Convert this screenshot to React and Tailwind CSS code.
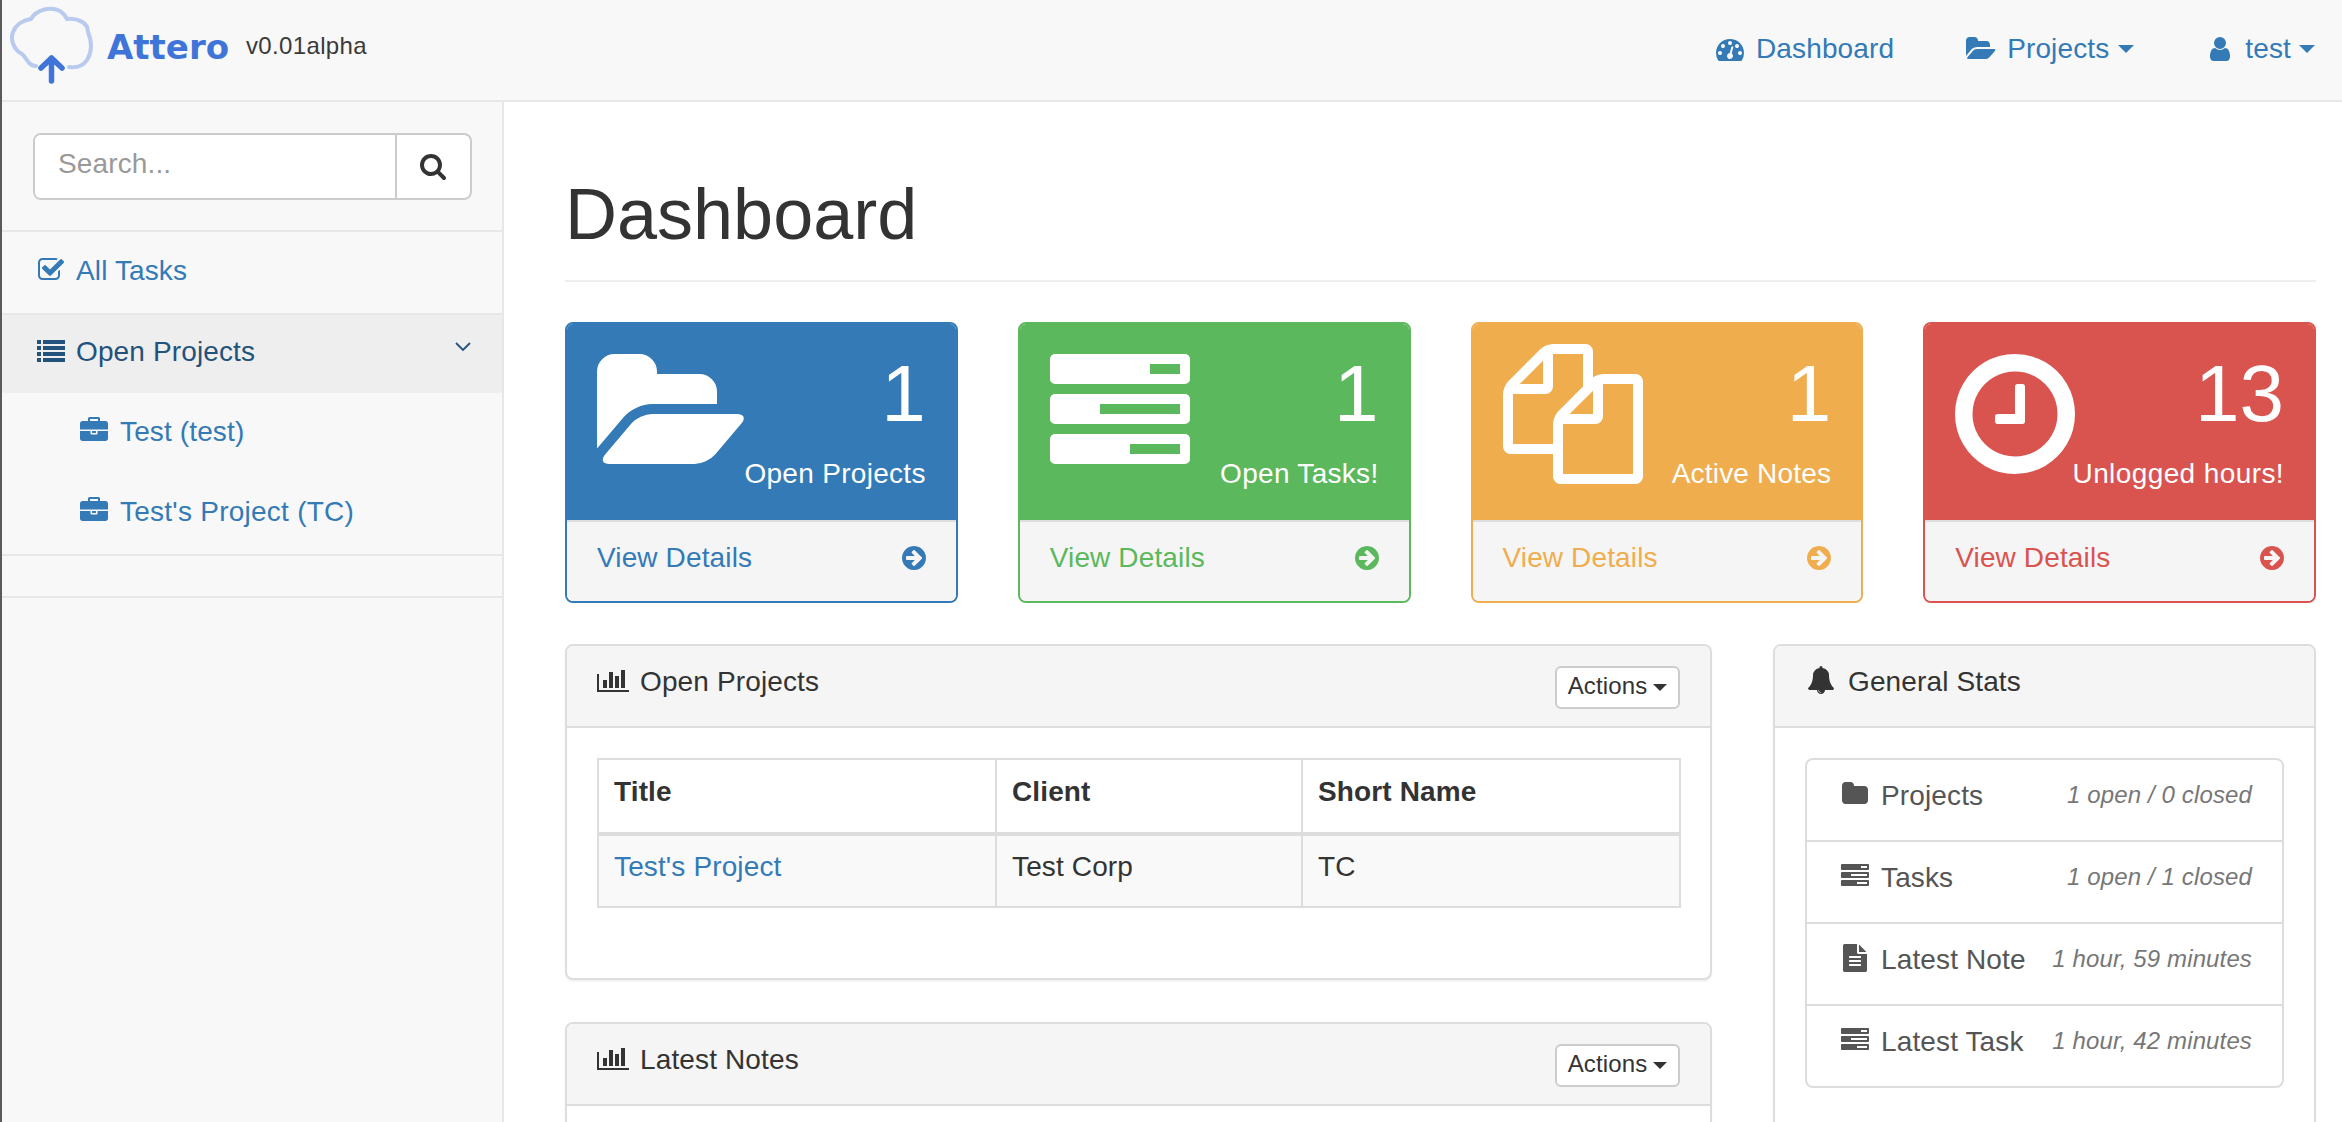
import React from "react";

const P = {
  folderOpen: "M1879 952q0 31-31 66l-336 396q-43 51-120.5 86.5t-143.5 35.5h-1088q-34 0-60.5-13t-26.5-43q0-31 31-66l336-396q43-51 120.5-86.5t143.5-35.5h1088q34 0 60.5 13t26.5 43zm-343-344v160h-832q-94 0-197 47.5t-164 119.5l-337 396-5 6q0-4-.5-12.5t-.5-12.5v-960q0-92 66-158t158-66h320q92 0 158 66t66 158v32h544q92 0 158 66t66 158z",
  tasks: "M1024 1408h640v-128h-640v128zm-384-512h1024v-128h-1024v128zm640-512h384v-128h-384v128zm512 832v256q0 26-19 45t-45 19h-1664q-26 0-45-19t-19-45v-256q0-26 19-45t45-19h1664q26 0 45 19t19 45zm0-512v256q0 26-19 45t-45 19h-1664q-26 0-45-19t-19-45v-256q0-26 19-45t45-19h1664q26 0 45 19t19 45zm0-512v256q0 26-19 45t-45 19h-1664q-26 0-45-19t-19-45v-256q0-26 19-45t45-19h1664q26 0 45 19t19 45z",
  files: "M1696 384q40 0 68 28t28 68v1216q0 40-28 68t-68 28h-960q-40 0-68-28t-28-68v-288h-544q-40 0-68-28t-28-68v-672q0-40 20-88t48-76l408-408q28-28 76-48t88-20h416q40 0 68 28t28 68v328q68-40 128-40h416zm-544 213l-299 299h299v-299zm-640-384l-299 299h299v-299zm196 647l316-316v-416h-384v416q0 40-28 68t-68 28h-416v640h512v-256q0-40 20-88t48-76zm956 804v-1152h-384v416q0 40-28 68t-68 28h-416v640h896z",
  clock: "M1024 544v448q0 14-9 23t-23 9h-320q-14 0-23-9t-9-23v-64q0-14 9-23t23-9h224v-352q0-14 9-23t23-9h64q14 0 23 9t9 23zm416 352q0-148-73-273t-198-198-273-73-273 73-198 198-73 273 73 273 198 198 273 73 273-73 198-198 73-273zm224 0q0 209-103 385.5t-279.5 279.5-385.5 103-385.5-103-279.5-279.5-103-385.5 103-385.5 279.5-279.5 385.5-103 385.5 103 279.5 279.5 103 385.5z",
  arrow: "M1285 896q0-27-18-45l-91-91-362-362q-18-18-45-18t-45 18l-91 91q-18 18-18 45t18 45l189 189h-502q-26 0-45 19t-19 45v128q0 26 19 45t45 19h502l-189 189q-19 19-19 45t19 45l91 91q18 18 45 18t45-18l362-362 91-91q18-18 18-45zm251 0q0 209-103 385.5t-279.5 279.5-385.5 103-385.5-103-279.5-279.5-103-385.5 103-385.5 279.5-279.5 385.5-103 385.5 103 279.5 279.5 103 385.5z",
  search: "M1216 832q0-185-131.5-316.5t-316.5-131.5-316.5 131.5-131.5 316.5 131.5 316.5 316.5 131.5 316.5-131.5 131.5-316.5zm512 832q0 52-38 90t-90 38q-54 0-90-38l-343-342q-179 124-399 124-143 0-273.5-55.5t-225-150-150-225-55.5-273.5 55.5-273.5 150-225 225-150 273.5-55.5 273.5 55.5 225 150 150 225 55.5 273.5q0 220-124 399l343 343q37 37 37 90z",
  check: "M1472 930v318q0 119-84.5 203.5t-203.5 84.5h-832q-119 0-203.5-84.5t-84.5-203.5v-832q0-119 84.5-203.5t203.5-84.5h832q63 0 117 25 15 7 18 23 3 17-9 29l-49 49q-10 10-23 10-3 0-9-2-23-6-45-6h-832q-66 0-113 47t-47 113v832q0 66 47 113t113 47h832q66 0 113-47t47-113v-254q0-13 9-22l64-64q10-10 23-10 6 0 12 3 20 8 20 29zm231-489l-814 814q-24 24-57 24t-57-24l-430-430q-24-24-24-57t24-57l110-110q24-24 57-24t57 24l263 263 647-647q24-24 57-24t57 24l110 110q24 24 24 57t-24 57z",
  briefcase: "M640 256h512v-128h-512v128zm1152 640v480q0 66-47 113t-113 47h-1472q-66 0-113-47t-47-113v-480h672v160q0 26 19 45t45 19h320q26 0 45-19t19-45v-160h672zm-768 0v128h-256v-128h256zm768-480v384h-1792v-384q0-66 47-113t113-47h352v-160q0-40 28-68t68-28h576q40 0 68 28t28 68v160h352q66 0 113 47t47 113z",
  dashboard: "M384 1152q0-53-37.5-90.5t-90.5-37.5-90.5 37.5-37.5 90.5 37.5 90.5 90.5 37.5 90.5-37.5 37.5-90.5zm192-448q0-53-37.5-90.5t-90.5-37.5-90.5 37.5-37.5 90.5 37.5 90.5 90.5 37.5 90.5-37.5 37.5-90.5zm428 481l101-382q6-26-7.5-48.5t-38.5-29.5-48 6.5-30 39.5l-101 382q-60 5-107 43.5t-63 98.5q-20 77 20 146t117 89 146-20 89-117q16-60-6-117t-72-91zm660-33q0-53-37.5-90.5t-90.5-37.5-90.5 37.5-37.5 90.5 37.5 90.5 90.5 37.5 90.5-37.5 37.5-90.5zm-640-640q0-53-37.5-90.5t-90.5-37.5-90.5 37.5-37.5 90.5 37.5 90.5 90.5 37.5 90.5-37.5 37.5-90.5zm448 192q0-53-37.5-90.5t-90.5-37.5-90.5 37.5-37.5 90.5 37.5 90.5 90.5 37.5 90.5-37.5 37.5-90.5zm320 448q0 261-141 483-19 29-54 29h-1402q-35 0-54-29-141-221-141-483 0-182 71-348t191-286 286-191 348-71 348 71 286 191 191 286 71 348z",
  user: "M1536 1399q0 109-62.5 187t-150.5 78h-854q-88 0-150.5-78t-62.5-187q0-85 8.5-160.5t31.5-152 58.5-131 94-89 134.5-34.5q131 128 313 128t313-128q76 0 134.5 34.5t94 89 58.5 131 31.5 152 8.5 160.5zm-256-887q0 159-112.5 271.5t-271.5 112.5-271.5-112.5-112.5-271.5 112.5-271.5 271.5-112.5 271.5 112.5 112.5 271.5z",
  chart: "M640 896v512h-256v-512h256zm384-512v1024h-256v-1024h256zm1024 1152v128h-2048v-1152h128v1024h1920zm-640-896v768h-256v-768h256zm384-384v1152h-256v-1152h256z",
  bell: "M912 1696q0-16-16-16-59 0-101.5-42.5t-42.5-101.5q0-16-16-16t-16 16q0 73 51.5 124.5t124.5 51.5q16 0 16-16zm816-288q0 52-38 90t-90 38h-448q0 106-75 181t-181 75-181-75-75-181h-448q-52 0-90-38t-38-90q50-42 91-88t85-119.5 74.5-158.5 50-206 19.5-260q0-152 117-282.5t307-158.5q-8-19-8-39 0-40 28-68t68-28 68 28 28 68q0 20-8 39 190 28 307 158.5t117 282.5q0 139 19.5 260t50 206 74.5 158.5 85 119.5 91 88z",
  folder: "M1728 608v704q0 92-66 158t-158 66h-1216q-92 0-158-66t-66-158v-960q0-92 66-158t158-66h320q92 0 158 66t66 158v32h672q92 0 158 66t66 158z",
  file: "M1596 476q14 14 28 36h-472v-472q22 14 36 28zm-476 164h544v1056q0 40-28 68t-68 28h-1344q-40 0-68-28t-28-68v-1600q0-40 28-68t68-28h800v544q0 40 28 68t68 28zm160 736v-64q0-14-9-23t-23-9h-704q-14 0-23 9t-9 23v64q0 14 9 23t23 9h704q14 0 23-9t9-23zm0-256v-64q0-14-9-23t-23-9h-704q-14 0-23 9t-9 23v64q0 14 9 23t23 9h704q14 0 23-9t9-23zm0-256v-64q0-14-9-23t-23-9h-704q-14 0-23 9t-9 23v64q0 14 9 23t23 9h704q14 0 23-9t9-23z",
};

function Fa({ d, w = 1792, x = 0, className }) {
  return (
    <svg viewBox={`${x} 0 ${w} 1792`} className={`block shrink-0 fill-current ${className}`}>
      <path d={d} />
    </svg>
  );
}

function ListIcon({ className }) {
  return (
    <svg viewBox="0 0 28 22" className={`block shrink-0 fill-current ${className}`}>
      <rect x="0" y="0" width="4" height="4" />
      <rect x="6" y="0" width="22" height="4" />
      <rect x="0" y="6" width="4" height="4" />
      <rect x="6" y="6" width="22" height="4" />
      <rect x="0" y="12" width="4" height="4" />
      <rect x="6" y="12" width="22" height="4" />
      <rect x="0" y="18" width="4" height="4" />
      <rect x="6" y="18" width="22" height="4" />
    </svg>
  );
}

function Caret({ className }) {
  return (
    <span className={`inline-block w-0 h-0 border-x-[8px] border-x-transparent border-t-[8px] border-t-current ${className}`} />
  );
}

function Logo() {
  return (
    <svg viewBox="0 0 100 90" className="block w-[100px] h-[90px] shrink-0" fill="none">
      <path
        d="M36 66C28 66 27 58 22 54C14 50 10 40 13 32C16 24 24 20 31 19C36 10 50 6 60 11C63 13 65 15 67 19C77 18 88 22 88 32C92 42 92 52 87 60C83 66 76 68 69 67"
        stroke="#b8cbef"
        strokeWidth="4"
        strokeLinecap="round"
      />
      <path d="M51.5 81V58M41 68L51.5 58L62 68" stroke="#3f74d8" strokeWidth="5.5" strokeLinecap="round" strokeLinejoin="round" />
    </svg>
  );
}

function Navbar() {
  return (
    <header className="h-[102px] shrink-0 bg-[#f8f8f8] border-b-2 border-[#e7e7e7] flex items-start">
      <div className="flex items-start">
        <div className="ml-[-2px]"><Logo /></div>
        <span className="ml-[7px] mt-[24px] text-[34px] leading-[46px] font-bold text-[#3f74d8] font-['DejaVu_Sans'] tracking-normal">Attero</span>
        <span className="ml-[17px] mt-[30px] text-[24px] leading-[32px] tracking-[0.35px] text-[#3a3a3a]">v0.01alpha</span>
      </div>
      <nav className="ml-auto flex items-center h-[97px] text-[#337ab7] text-[28px] leading-[40px] pr-[27px]">
        <Fa d={P.dashboard} className="w-[28px] h-[28px]" />
        <span className="ml-[12px]">Dashboard</span>
        <Fa d={P.folderOpen} w={1920} className="ml-[72px] w-[30px] h-[28px]" />
        <span className="ml-[11px]">Projects</span>
        <Caret className="ml-[9px]" />
        <Fa d={P.user} className="ml-[72px] w-[28px] h-[28px] -mx-[3px]" />
        <span className="ml-[14px]">test</span>
        <Caret className="ml-[8px]" />
      </nav>
    </header>
  );
}

function Sidebar() {
  return (
    <aside className="w-[502px] shrink-0 bg-[#f8f8f8] border-r-2 border-[#e7e7e7] text-[28px] leading-[40px] text-[#337ab7]">
      <div className="h-[130px] border-b-2 border-[#e7e7e7] pl-[31px] pt-[31px]">
        <div className="flex w-[439px] h-[67px] bg-white border-2 border-[#ccc] rounded-lg overflow-hidden">
          <input
            placeholder="Search..."
            className="w-[360px] min-w-0 px-[23px] pb-[5px] text-[28px] text-[#555] placeholder:text-[#999] outline-none bg-white"
          />
          <div className="flex-1 border-l-2 border-[#ccc] flex items-center justify-center text-[#333]">
            <Fa d={P.search} className="w-[28px] h-[28px] -mt-[1px] -ml-[1px]" />
          </div>
        </div>
      </div>
      <div className="h-[83px] border-b-2 border-[#e7e7e7] pt-[19px] pl-[35px] flex items-start">
        <Fa d={P.check} className="w-[28px] h-[28px] mt-[5px]" />
        <span className="ml-[11px]">All Tasks</span>
      </div>
      <div className="h-[78px] bg-[#eee] text-[#23527c] pt-[17px] pl-[35px] pr-[31px] flex items-start">
        <ListIcon className="w-[28px] h-[22px] mt-[8px]" />
        <span className="ml-[11px]">Open Projects</span>
        <svg viewBox="0 0 16 10" className="ml-auto mt-[10px] w-[16px] h-[10px]" fill="none" stroke="currentColor" strokeWidth="1.8">
          <path d="M1 1L8 8L15 1" />
        </svg>
      </div>
      <div className="h-[80px] pt-[19px] pl-[78px] flex items-start">
        <Fa d={P.briefcase} className="w-[28px] h-[28px] mt-[5px]" />
        <span className="ml-[12px]">Test (test)</span>
      </div>
      <div className="h-[83px] border-b-2 border-[#e7e7e7] pt-[19px] pl-[78px] flex items-start">
        <Fa d={P.briefcase} className="w-[28px] h-[28px] mt-[5px]" />
        <span className="ml-[12px] tracking-[0.25px]">Test's Project (TC)</span>
      </div>
      <div className="h-[42px] border-b-2 border-[#e7e7e7]" />
    </aside>
  );
}

const cards = [
  { n: "1", label: "Open Projects", d: P.folderOpen, w: 1920, x: 0, iw: "w-[150px]", border: "border-[#337ab7]", bg: "bg-[#337ab7]", text: "text-[#337ab7]", t: "tracking-[0.3px]" },
  { n: "1", label: "Open Tasks!", d: P.tasks, w: 1792, x: 0, iw: "w-[140px]", border: "border-[#5cb85c]", bg: "bg-[#5cb85c]", text: "text-[#5cb85c]", t: "tracking-[0.3px]" },
  { n: "1", label: "Active Notes", d: P.files, w: 1792, x: 0, iw: "w-[140px]", border: "border-[#f0ad4e]", bg: "bg-[#f0ad4e]", text: "text-[#f0ad4e]", t: "tracking-[0.2px]" },
  { n: "13", label: "Unlogged hours!", d: P.clock, w: 1536, x: 128, iw: "w-[120px]", border: "border-[#d9534f]", bg: "bg-[#d9534f]", text: "text-[#d9534f]", t: "tracking-[0.4px]" },
];

function StatCard({ c }) {
  return (
    <div className={`border-2 rounded-lg overflow-hidden ${c.border}`}>
      <div className={`h-[196px] flex px-[30px] pt-[20px] text-white ${c.bg}`}>
        <Fa d={c.d} w={c.w} x={c.x} className={`${c.iw} h-[140px]`} />
        <div className="flex-1 min-w-0 text-right pt-[8px]">
          <div className="text-[80px] leading-[84px] tracking-normal">{c.n}</div>
          <div className="flex justify-end mt-[18px]">
            <span className={`text-[28px] leading-[40px] whitespace-nowrap shrink-0 ${c.t}`}>{c.label}</span>
          </div>
        </div>
      </div>
      <div className={`h-[81px] bg-[#f5f5f5] border-t-2 border-[#ddd] flex justify-between items-start px-[30px] pt-[16px] ${c.text}`}>
        <span className="text-[28px] leading-[40px]">View Details</span>
        <Fa d={P.arrow} w={1536} className="w-[24px] h-[28px] mt-[6px]" />
      </div>
    </div>
  );
}

function Panel({ icon, iconW, title, actions, children, iconClass, titleClass = "ml-[11px]" }) {
  return (
    <div className="border-2 border-[#ddd] rounded-lg bg-white shadow-[0_2px_2px_rgba(0,0,0,0.05)] overflow-hidden">
      <div className="h-[82px] bg-[#f5f5f5] border-b-2 border-[#ddd] flex items-start pl-[30px] pr-[30px] pt-[16px] text-[#333]">
        <Fa d={icon} w={iconW} className={`${iconClass} mt-[4px]`} />
        <span className={`${titleClass} text-[28px] leading-[40px]`}>{title}</span>
        {actions && (
          <div className="ml-auto mt-[4px] h-[43px] w-[125px] bg-white border-2 border-[#ccc] rounded-[6px] flex items-center justify-center pb-[3px] text-[24px] leading-[32px] text-[#333]">
            Actions
            <Caret className="ml-[6px] mt-[3px] !border-x-[7px] !border-t-[7px]" />
          </div>
        )}
      </div>
      {children}
    </div>
  );
}

function ProjectsTable() {
  const th = "border-2 border-[#ddd] border-b-[4px] text-left font-bold px-[15px] pt-[12px] pb-[20px] leading-[40px] align-top";
  const td = "border-2 border-[#ddd] text-left px-[15px] pt-[11px] pb-[19px] leading-[40px] align-top";
  return (
    <table className="w-[1082px] border-collapse table-fixed text-[28px] text-[#333]">
      <colgroup>
        <col className="w-[398px]" />
        <col className="w-[306px]" />
        <col className="w-[378px]" />
      </colgroup>
      <thead>
        <tr>
          <th className={th}>Title</th>
          <th className={th}>Client</th>
          <th className={th}>Short Name</th>
        </tr>
      </thead>
      <tbody>
        <tr className="bg-[#f9f9f9]">
          <td className={`${td} text-[#337ab7]`}>Test's Project</td>
          <td className={td}>Test Corp</td>
          <td className={td}>TC</td>
        </tr>
      </tbody>
    </table>
  );
}

const stats = [
  { icon: P.folder, name: "Projects", val: "1 open / 0 closed" },
  { icon: P.tasks, name: "Tasks", val: "1 open / 1 closed" },
  { icon: P.file, name: "Latest Note", val: "1 hour, 59 minutes" },
  { icon: P.tasks, name: "Latest Task", val: "1 hour, 42 minutes" },
];

function StatsList() {
  return (
    <div className="border-2 border-[#ddd] rounded-lg divide-y-2 divide-[#ddd] text-[#555]">
      {stats.map((s) => (
        <div key={s.name} className="h-[80px] box-content flex items-start pl-[30px] pr-[30px]">
          <span className="w-[36px] flex justify-center mt-[20px] shrink-0">
            <Fa d={s.icon} className="w-[28px] h-[28px]" />
          </span>
          <span className="ml-[8px] mt-[16px] text-[28px] leading-[40px] whitespace-nowrap">{s.name}</span>
          <span className="ml-auto mt-[15px] text-[24px] leading-[40px] italic text-[#777] whitespace-nowrap">{s.val}</span>
        </div>
      ))}
    </div>
  );
}

export default function App() {
  return (
    <div className="h-[1122px] w-[2342px] overflow-hidden flex bg-white font-['Liberation_Sans',sans-serif] text-[#333] tracking-[0.13px]">
      <div className="w-[2px] shrink-0 bg-[#5a5a5a]" />
      <div className="flex-1 min-w-0 flex flex-col">
        <Navbar />
        <div className="flex flex-1 min-h-0">
          <Sidebar />
          <main className="flex-1 min-w-0 pl-[61px] pr-[26px] overflow-hidden">
            <h1 className="text-[72px] leading-[80px] mt-[72px] pb-[26px] border-b-2 border-[#eee] text-[#333] tracking-normal">Dashboard</h1>
            <div className="grid grid-cols-4 gap-x-[60px] mt-[40px]">
              {cards.map((c) => (
                <StatCard key={c.label + c.n} c={c} />
              ))}
            </div>
            <div className="grid grid-cols-[1147px_1fr] gap-x-[61px] mt-[41px] items-start">
              <div className="flex flex-col gap-y-[42px]">
                <Panel icon={P.chart} iconW={2048} iconClass="w-[32px] h-[28px]" title="Open Projects" actions>
                  <div className="p-[30px] pb-[70px]">
                    <ProjectsTable />
                  </div>
                </Panel>
                <Panel icon={P.chart} iconW={2048} iconClass="w-[32px] h-[28px]" title="Latest Notes" actions>
                  <div className="h-[200px]" />
                </Panel>
              </div>
              <Panel icon={P.bell} iconW={1792} iconClass="w-[28px] h-[28px] ml-[2px]" titleClass="ml-[13px]" title="General Stats">
                <div className="p-[30px] h-[500px]">
                  <StatsList />
                </div>
              </Panel>
            </div>
          </main>
        </div>
      </div>
    </div>
  );
}
